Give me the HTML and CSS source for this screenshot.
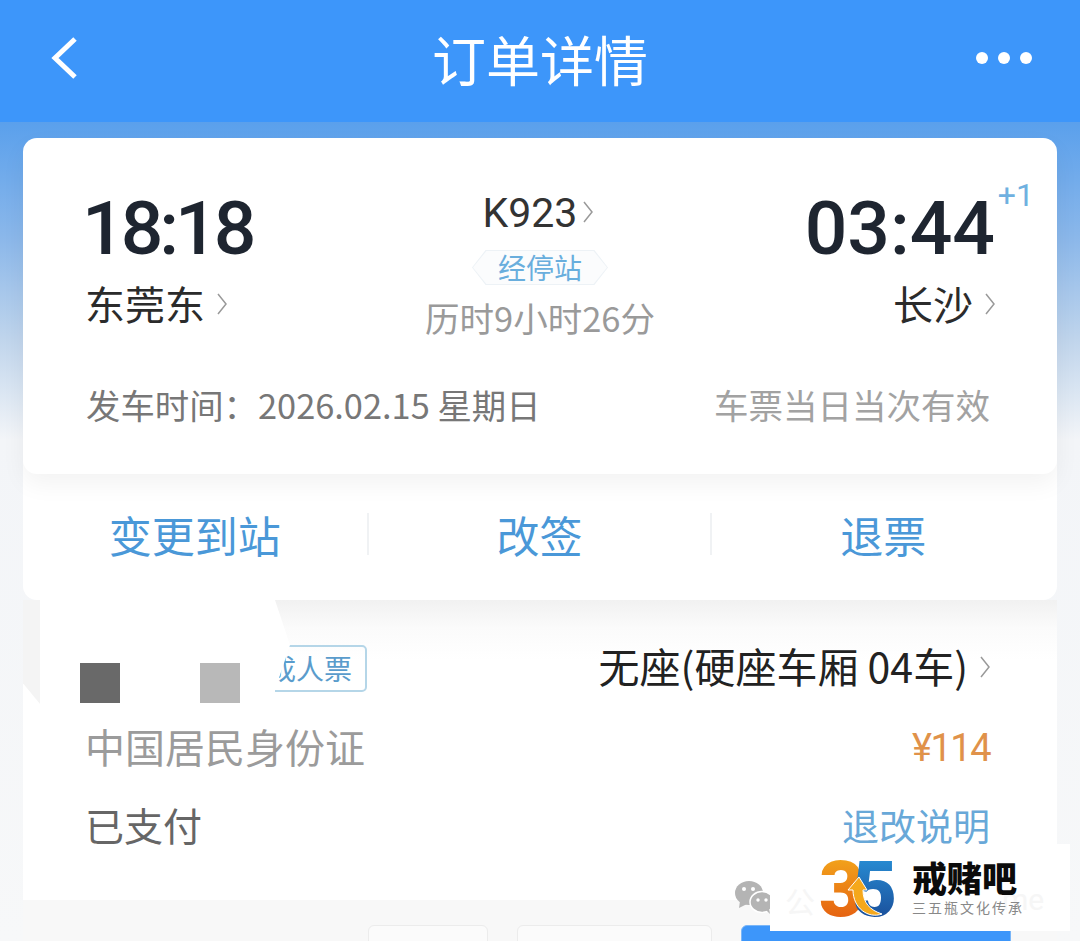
FILE: index.html
```html
<!DOCTYPE html>
<html lang="zh-CN">
<head>
    <meta charset="UTF-8">
    <meta name="viewport" content="width=device-width, initial-scale=1.0">
    <title>订单详情</title>
    <link rel="stylesheet" href="styles.css">
</head>
<body>
    <header class="topbar">
        <svg class="back" width="30" height="44" viewBox="0 0 30 44"><polyline points="25,3 5,22 25,41"/></svg>
        <h1>订单详情</h1>
        <div class="more"><i></i><i></i><i></i></div>
    </header>

    <main class="order">
        <section class="trip">
            <div class="route">
                <div class="stop">
                    <div class="time narrow">18:18</div>
                    <div class="station">东莞东<svg class="chev" viewBox="0 0 10 22"><polyline points="1,1 9,11 1,21"/></svg></div>
                </div>
                <div class="train">
                    <div class="train-no">K923<svg class="chev" viewBox="0 0 10 22"><polyline points="1,1 9,11 1,21"/></svg></div>
                    <div class="stops-tag"><span>经停站</span></div>
                    <div class="duration">历时9小时26分</div>
                </div>
                <div class="stop arrive">
                    <div class="time">03:44<span class="plus">+1</span></div>
                    <div class="station">长沙<svg class="chev" viewBox="0 0 10 22"><polyline points="1,1 9,11 1,21"/></svg></div>
                </div>
            </div>
            <div class="depart">
                <span>发车时间：2026.02.15 星期日</span>
                <span class="valid">车票当日当次有效</span>
            </div>
        </section>

        <nav class="actions">
            <a>变更到站</a>
            <a>改签</a>
            <a>退票</a>
        </nav>
    </main>

    <section class="passenger">
        <div class="pass-row first">
            <span class="ticket-tag">成人票</span>
            <span class="seat">无座(硬座车厢 04车)<svg class="chev" viewBox="0 0 10 22"><polyline points="1,1 9,11 1,21"/></svg></span>
        </div>
        <div class="pass-row">
            <span class="id-type">中国居民身份证</span>
            <span class="price">¥114</span>
        </div>
        <div class="pass-row">
            <span class="paid">已支付</span>
            <a class="rules">退改说明</a>
        </div>
        <!-- 姓名打码 -->
        <div class="mask-smear"></div>
        <div class="mask"></div>
        <div class="mosaic dark"></div>
        <div class="mosaic light"></div>
    </section>

    <footer class="bottom">
        <div class="btn small"></div>
        <div class="btn mid"></div>
        <div class="btn primary"></div>
    </footer>

    <!-- 公众号水印 -->
    <svg class="wechat" width="38" height="33" viewBox="0 0 38 33">
        <ellipse class="bubble" cx="14" cy="12" rx="14" ry="12"/>
        <path class="bubble" d="M5 20l-1 7 8-4z"/>
        <ellipse class="bubble front" cx="27" cy="21" rx="12" ry="10.500"/>
        <path class="bubble" d="M31 29l4 4-1-6z"/>
        <circle class="eye" cx="9" cy="8" r="2"/><circle class="eye" cx="18" cy="8" r="2"/>
        <circle class="eye" cx="23" cy="19" r="1.700"/><circle class="eye" cx="31" cy="19" r="1.700"/>
    </svg>
    <div class="brand">
        <span class="wm wm-left">公</span>
        <span class="wm wm-right">me</span>
        <svg class="brand-mark" width="76" height="60" viewBox="0 0 76 60">
            <defs>
                <linearGradient id="three" x1="0" y1="0" x2="0" y2="1">
                    <stop offset="0" stop-color="#f5b21d"/>
                    <stop offset="1" stop-color="#e2500f"/>
                </linearGradient>
                <linearGradient id="five" x1="0" y1="0" x2="0" y2="1">
                    <stop offset="0" stop-color="#2a9ae0"/>
                    <stop offset="1" stop-color="#173f8c"/>
                </linearGradient>
            </defs>
            <text class="digit" x="-1" y="58" fill="url(#three)">3</text>
            <text class="digit" x="32" y="58" fill="url(#five)">5</text>
            <path class="arrow" d="M39 19L47 32H43C43 45 50 52 62 56 48 61 33 50 33 32H28Z"/>
        </svg>
        <div class="brand-text">
            <div class="brand-name">戒赌吧</div>
            <div class="brand-sub">三五瓶文化传承</div>
        </div>
    </div>
</body>
</html>
```

FILE: styles.css
```css
* {
    box-sizing: border-box;
}
html, body {
    margin: 0;
    padding: 0;
}
body {
    position: relative;
    width: 1080px;
    height: 941px;
    overflow: hidden;
    font-family: "Noto Sans CJK SC", "Noto Sans", sans-serif;
    color: #222;
    background: linear-gradient(to bottom, #5aa0ec 122px, #8cb8ea 240px, #c0d5ec 340px, #f3f5f8 440px, #f7f8f9 100%);
}
svg polyline {
    fill: none;
}

/* 顶栏 */
.topbar {
    height: 122px;
    background-color: #3d96fa;
    display: flex;
    align-items: center;
    justify-content: space-between;
    padding: 0 48px 6px 50px;
    position: relative;
}
.topbar h1 {
    position: absolute;
    left: 0;
    right: 0;
    top: 21px;
    margin: 0;
    text-align: center;
    font-size: 54px;
    font-weight: 400;
    line-height: 76px;
    color: #fff;
}
.back polyline {
    stroke: #fff;
    stroke-width: 5;
}
.more {
    display: flex;
    gap: 10px;
}
.more i {
    width: 12px;
    height: 12px;
    border-radius: 50%;
    background-color: #fff;
}

/* 车次卡片 */
.order {
    margin: 16px 23px 0;
    height: 462px;
    background-color: #fff;
    border-radius: 14px;
}
.trip {
    height: 336px;
    padding: 40px 62px 0;
    border-radius: 14px;
    box-shadow: 0 10px 24px rgba(0, 0, 0, 0.05);
}
.route {
    display: grid;
    grid-template-columns: 1fr auto 1fr;
    height: 170px;
}
.time {
    font-family: Roboto, sans-serif;
    font-size: 75px;
    font-weight: 500;
    line-height: 100px;
    color: #1e2530;
}
.narrow {
    letter-spacing: -4px;
    margin-left: -3px;
}
.station {
    font-size: 40px;
    line-height: 50px;
    color: #2b2b2b;
    white-space: nowrap;
}
.chev {
    width: 10px;
    height: 22px;
    margin-left: 12px;
    vertical-align: 5px;
}
.chev polyline {
    stroke: #999;
    stroke-width: 1.5;
}
.arrive {
    text-align: right;
    position: relative;
}
.plus {
    position: absolute;
    right: -39px;
    top: -3px;
    font-size: 32px;
    font-weight: 400;
    line-height: 40px;
    color: #6fb0e0;
}
.train {
    display: flex;
    flex-direction: column;
    align-items: center;
}
.train-no {
    font-family: Roboto, sans-serif;
    font-size: 41px;
    line-height: 50px;
    margin: 10px 4px 0 0;
    color: #333;
    white-space: nowrap;
}
.train-no .chev {
    margin-left: 6px;
    vertical-align: 4px;
}
.stops-tag {
    position: relative;
    width: 136px;
    height: 35px;
    margin-top: 12px;
    text-align: center;
    font-size: 28px;
    line-height: 35px;
    color: #69aedd;
    background-color: #edf2f6;
    clip-path: polygon(10% 0, 90% 0, 100% 50%, 90% 100%, 10% 100%, 0 50%);
}
.stops-tag::before {
    content: "";
    position: absolute;
    inset: 1px;
    background-color: #fbfcfd;
    clip-path: polygon(10% 0, 90% 0, 100% 50%, 90% 100%, 10% 100%, 0 50%);
}
.stops-tag span {
    position: relative;
}
.duration {
    margin-top: 10px;
    font-size: 34.5px;
    line-height: 44px;
    color: #9a9a9a;
    white-space: nowrap;
}
.depart {
    display: flex;
    justify-content: space-between;
    align-items: center;
    height: 50px;
    margin-top: 31px;
    font-size: 34.4px;
    color: #777;
    padding: 0 5px 0 1px;
}
.valid {
    font-size: 34.5px;
    color: #a2a2a2;
}

/* 操作栏 */
.actions {
    display: grid;
    grid-template-columns: repeat(3, 1fr);
    align-items: center;
    height: 126px;
    padding: 0 3px 6px 0;
}
.actions a {
    height: 42px;
    line-height: 42px;
    text-align: center;
    font-size: 43px;
    color: #4a98d8;
    border-left: 2px solid #f0f2f4;
}
.actions a:first-child {
    border-left: none;
}

/* 乘客信息 */
.passenger {
    position: relative;
    margin: 0 23px;
    height: 300px;
    padding: 44px 67px 0 62px;
    background: linear-gradient(to bottom, #f1f1f1, #fbfbfb 28px, #fff 60px);
}
.pass-row {
    display: flex;
    justify-content: space-between;
    align-items: center;
    height: 78px;
}
.first {
    height: 48px;
    margin-bottom: 15px;
    padding-left: 172px;
}
.ticket-tag {
    width: 110px;
    height: 47px;
    line-height: 43px;
    padding-right: 4px;
    text-align: center;
    font-size: 28px;
    color: #5a9ccc;
    border: 2px solid #b5d6e8;
    border-radius: 5px;
}
.seat {
    font-size: 41px;
    line-height: 48px;
    padding-bottom: 6px;
    color: #222;
    white-space: nowrap;
}
.id-type {
    font-size: 40px;
    color: #9b9b9b;
}
.price {
    font-family: Roboto, sans-serif;
    font-size: 38px;
    letter-spacing: -1.5px;
    padding-top: 4px;
    color: #e0924a;
}
.paid {
    font-size: 39px;
    color: #666;
}
.rules {
    font-size: 37px;
    color: #68a8d8;
    border-bottom: 1px solid #dcebf5;
    line-height: 44px;
    margin-top: 2px;
}
.mask {
    position: absolute;
    left: 17px;
    top: 0;
    width: 250px;
    height: 103px;
    background-color: #fff;
    clip-path: polygon(0 0, 235px 0, 250px 45px, 235px 90px, 235px 103px, 0 103px);
}
.mask-smear {
    position: absolute;
    left: 0;
    top: 0;
    width: 17px;
    height: 104px;
    background-color: #f4f4f4;
    clip-path: polygon(0 0, 100% 0, 100% 100%, 0 80%);
}
.mosaic {
    position: absolute;
    top: 63px;
    width: 40px;
    height: 40px;
}
.dark {
    left: 57px;
    background-color: #696969;
}
.light {
    left: 177px;
    background-color: #b8b8b8;
}

/* 底部按钮 */
.bottom {
    display: flex;
    justify-content: flex-end;
    align-items: flex-start;
    gap: 29px;
    height: 41px;
    padding: 25px 46px 0 0;
    background-color: #f8f8f8;
    margin: 0 23px;
}
.btn {
    height: 60px;
    background-color: #fbfbfb;
    border: 1px solid #ececec;
    border-radius: 6px;
}
.small {
    width: 120px;
}
.mid {
    width: 195px;
}
.primary {
    width: 270px;
    background-color: #3d96fa;
    border-color: #7ab6f8;
}

/* 水印 */
.wechat {
    position: absolute;
    left: 735px;
    top: 881px;
}
.bubble {
    fill: #b4b4b4;
}
.front {
    stroke: #fff;
    stroke-width: 1.5;
}
.eye {
    fill: #fff;
}
.brand {
    position: absolute;
    left: 770px;
    top: 844px;
    width: 300px;
    height: 87px;
    background-color: #fff;
    display: flex;
    align-items: center;
    gap: 16px;
    padding-left: 50px;
}
.wm {
    position: absolute;
    top: 38px;
    font-size: 30px;
    line-height: 36px;
    color: #f6f6f6;
}
.wm-left {
    left: 15px;
}
.wm-right {
    left: 232px;
    font-family: Roboto, sans-serif;
}
.brand-mark,
.brand-text {
    position: relative;
}
.digit {
    font-family: Roboto, sans-serif;
    font-size: 78px;
    font-weight: 900;
}
.arrow {
    fill: #f5a81c;
    stroke: #fff;
    stroke-width: 1;
}
.brand-name {
    font-size: 35px;
    font-weight: 900;
    line-height: 38px;
    color: #0b0b0b;
}
.brand-sub {
    font-size: 14px;
    line-height: 22px;
    letter-spacing: 2px;
    color: #888;
}
```
